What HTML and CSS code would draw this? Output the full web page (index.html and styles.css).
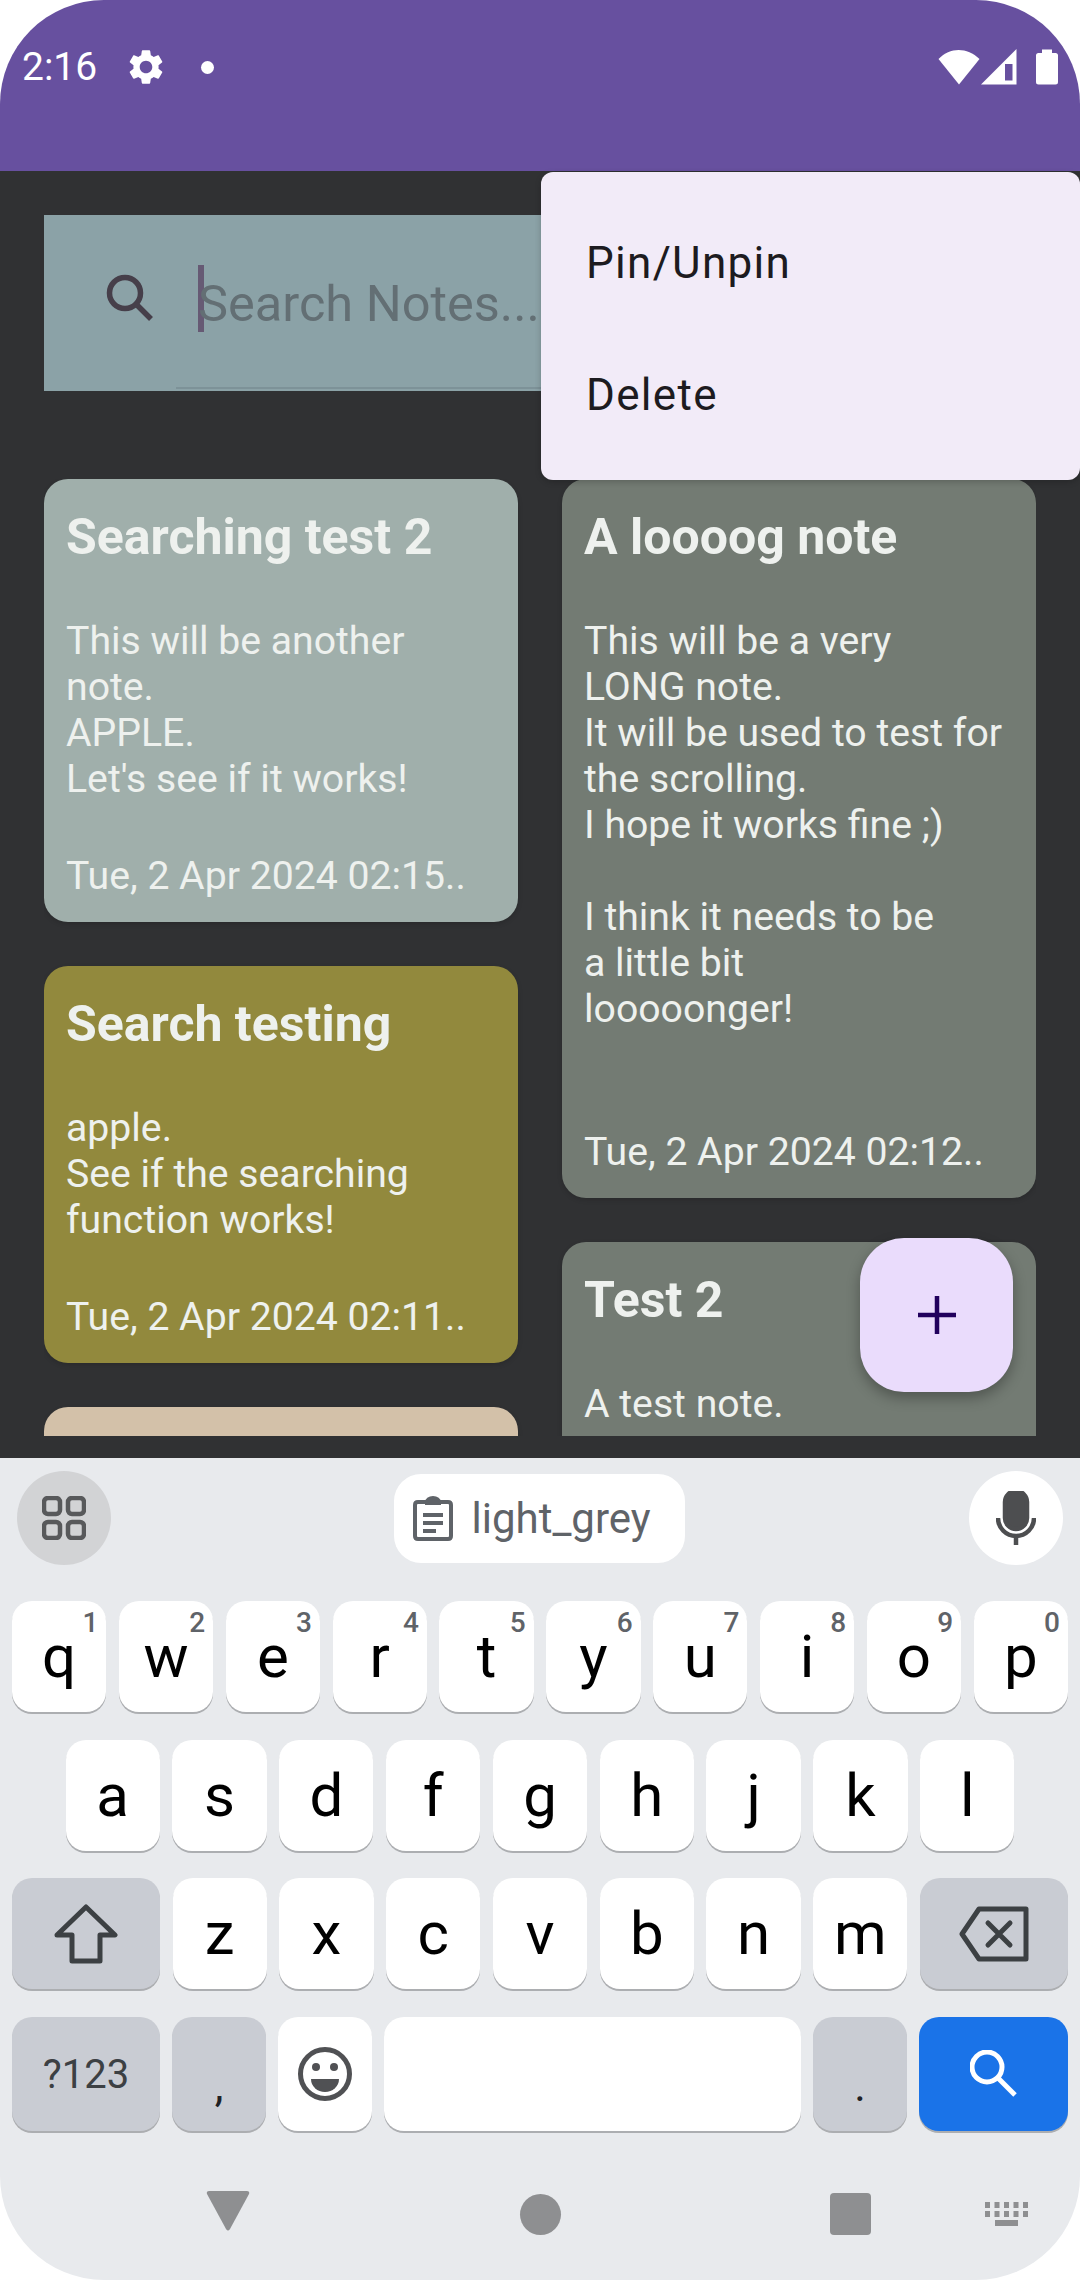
FILE: index.html
```html
<!DOCTYPE html>
<html lang="en">
<head>
  <meta charset="UTF-8">
  <title>Notes</title>
  <link rel="stylesheet" href="styles.css">
</head>
<body>
  <div class="screen">

    <!-- Status bar and app bar -->
    <header class="top-bar">
      <span class="clock">2:16</span>
      <svg class="gear" viewBox="0 0 24 24"><path d="M19.14 12.94c.04-.3.06-.61.06-.94 0-.32-.02-.64-.07-.94l2.03-1.58c.18-.14.23-.41.12-.61l-1.92-3.32c-.12-.22-.37-.29-.59-.22l-2.39.96c-.5-.38-1.03-.7-1.62-.94l-.36-2.54c-.04-.24-.24-.41-.48-.41h-3.84c-.24 0-.43.17-.47.41l-.36 2.54c-.59.24-1.13.57-1.62.94l-2.39-.96c-.22-.08-.47 0-.59.22L2.74 8.87c-.12.21-.08.47.12.61l2.03 1.58c-.05.3-.09.63-.09.94s.02.64.07.94l-2.03 1.58c-.18.14-.23.41-.12.61l1.92 3.32c.12.22.37.29.59.22l2.39-.96c.5.38 1.03.7 1.62.94l.36 2.54c.05.24.24.41.48.41h3.84c.24 0 .44-.17.47-.41l.36-2.54c.59-.24 1.13-.56 1.62-.94l2.39.96c.22.08.47 0 .59-.22l1.92-3.32c.12-.22.07-.47-.12-.61l-2.01-1.58zM12 15.6c-1.98 0-3.6-1.62-3.6-3.6s1.62-3.6 3.6-3.6 3.6 1.62 3.6 3.6-1.62 3.6-3.6 3.6z"/></svg>
      <span class="status-dot"></span>
      <div class="status-right">
        <svg class="wifi" viewBox="0 0 42 35"><path d="M0.5 9C12 -3 29 -3 41.500 9L21 34.500Z"/></svg>
        <svg class="signal" viewBox="0 0 36 36"><path fill-rule="evenodd" d="M0 35.500L35.500 0V35.500ZM24 15V31.500H31.500V15Z"/></svg>
        <svg class="battery" viewBox="0 0 22 36"><path d="M6 0.500H16V4H19.500Q22 4 22 6.500V33Q22 35.500 19.500 35.500H2.500Q0 35.500 0 33V6.500Q0 4 2.500 4H6Z"/></svg>
      </div>
    </header>

    <!-- Notes screen -->
    <main class="content">
      <div class="search-box">
        <svg class="search-icon" viewBox="0 0 48 48"><circle cx="19" cy="19" r="15.500"/><path d="M30 30L45 45"/></svg>
        <div class="search-field">
          <span class="caret"></span>
          <span class="placeholder">Search Notes...</span>
        </div>
      </div>

      <div class="notes">
        <div class="notes-col">
          <article class="note note-sage">
            <h3>Searching test 2</h3>
            <p>This will be another<br>note.<br>APPLE.<br>Let's see if it works!</p>
            <div class="note-date">Tue, 2 Apr 2024 02:15..</div>
          </article>
          <article class="note note-olive">
            <h3>Search testing</h3>
            <p>apple.<br>See if the searching<br>function works!</p>
            <div class="note-date">Tue, 2 Apr 2024 02:11..</div>
          </article>
          <article class="note note-sand note-cut"></article>
        </div>
        <div class="notes-col">
          <article class="note note-moss">
            <h3>A loooog note</h3>
            <p>This will be a very<br>LONG note.<br>It will be used to test for<br>the scrolling.<br>I hope it works fine ;)<br><br>I think it needs to be<br>a little bit<br>looooonger!<br><br></p>
            <div class="note-date">Tue, 2 Apr 2024 02:12..</div>
          </article>
          <article class="note note-moss note-cut">
            <h3>Test 2</h3>
            <p>A test note.</p>
          </article>
        </div>
      </div>

      <button class="fab"><svg viewBox="0 0 40 40"><path d="M20 1V39M1 20H39"/></svg></button>

      <div class="menu">
        <div class="menu-item">Pin/Unpin</div>
        <div class="menu-item">Delete</div>
      </div>
    </main>

    <!-- Keyboard -->
    <section class="keyboard">
      <div class="kb-tools">
        <div class="tool-btn tool-grey">
          <svg class="grid-icon" viewBox="0 0 44 44"><rect x="2" y="2" width="16" height="16" rx="4"/><rect x="26" y="2" width="16" height="16" rx="4"/><rect x="2" y="26" width="16" height="16" rx="4"/><rect x="26" y="26" width="16" height="16" rx="4"/></svg>
        </div>
        <div class="clip-chip">
          <svg class="clip-icon" viewBox="0 0 40 46"><path class="clip-outline" d="M13 7H5Q2 7 2 10V41Q2 44 5 44H35Q38 44 38 41V10Q38 7 35 7H27"/><path class="clip-top" d="M12 10V7A8 6 0 0 1 28 7V10Z"/><path class="clip-lines" d="M10 20H30M10 28H30M10 36H23"/></svg>
          <span>light_grey</span>
        </div>
        <div class="tool-btn">
          <svg class="mic-icon" viewBox="0 0 40 54"><rect x="9" y="0" width="22" height="38" rx="11" fill="#4d4e50"/><path d="M2 27A18 18 0 0 0 38 27M20 44V54"/></svg>
        </div>
      </div>

      <div class="kb-row">
        <div class="key">q<sup>1</sup></div>
        <div class="key">w<sup>2</sup></div>
        <div class="key">e<sup>3</sup></div>
        <div class="key">r<sup>4</sup></div>
        <div class="key">t<sup>5</sup></div>
        <div class="key">y<sup>6</sup></div>
        <div class="key">u<sup>7</sup></div>
        <div class="key">i<sup>8</sup></div>
        <div class="key">o<sup>9</sup></div>
        <div class="key">p<sup>0</sup></div>
      </div>
      <div class="kb-row kb-row-inset">
        <div class="key">a</div>
        <div class="key">s</div>
        <div class="key">d</div>
        <div class="key">f</div>
        <div class="key">g</div>
        <div class="key">h</div>
        <div class="key">j</div>
        <div class="key">k</div>
        <div class="key">l</div>
      </div>
      <div class="kb-row">
        <div class="key key-wide key-fn">
          <svg class="shift-icon" viewBox="0 0 64 60"><path d="M32 3L61 31H46V57H18V31H3Z"/></svg>
        </div>
        <div class="key">z</div>
        <div class="key">x</div>
        <div class="key">c</div>
        <div class="key">v</div>
        <div class="key">b</div>
        <div class="key">n</div>
        <div class="key">m</div>
        <div class="key key-wide key-fn">
          <svg class="back-icon" viewBox="0 0 70 56"><path d="M3 28L20 3H67V53H20Z"/><path d="M29 17L51 39M51 17L29 39"/></svg>
        </div>
      </div>
      <div class="kb-row kb-row-last">
        <div class="key key-wide key-fn key-label">?123</div>
        <div class="key key-fixed key-fn key-punct">,</div>
        <div class="key key-fixed">
          <svg class="emoji-icon" viewBox="0 0 56 56"><circle class="face" cx="28" cy="28" r="24.500"/><circle cx="19" cy="21" r="4"/><circle cx="37" cy="21" r="4"/><path d="M14 33H42A14 13 0 0 1 14 33Z"/></svg>
        </div>
        <div class="key"></div>
        <div class="key key-fixed key-fn key-punct">.</div>
        <div class="key key-wide key-go">
          <svg class="go-icon" viewBox="0 0 48 48"><circle cx="17" cy="17" r="15"/><path d="M28 28L45 45"/></svg>
        </div>
      </div>

      <nav class="nav-bar">
        <svg class="nav-back" viewBox="0 0 44 40"><path d="M3 0H41Q44 0 43 3L24 38Q22 41 20 38L1 3Q0 0 3 0Z"/></svg>
        <span class="nav-home"></span>
        <span class="nav-recent"></span>
        <svg class="nav-kb" viewBox="0 0 43 24"><path d="M0 0h5v6H0zM9.500 0h5v6h-5zM19 0h5v6h-5zM28.500 0h5v6h-5zM38 0h5v6h-5zM0 9h5v6H0zM9.500 9h5v6h-5zM19 9h5v6h-5zM28.500 9h5v6h-5zM38 9h5v6h-5zM10 18h23v6H10z"/></svg>
      </nav>
    </section>
  </div>
</body>
</html>
```

FILE: styles.css
```css
* {
  box-sizing: border-box;
}
body {
  margin: 0;
  background: #fff;
  font-family: Roboto, "Liberation Sans", sans-serif;
}
.screen {
  width: 1080px;
  height: 2280px;
  border-radius: 104px;
  overflow: hidden;
  display: flex;
  flex-direction: column;
}

/* top bar */
.top-bar {
  height: 171px;
  flex: none;
  background: #67509f;
  color: #fff;
  display: flex;
  align-items: center;
  align-self: stretch;
  padding: 47px 22px 84px 22px;
}
.clock {
  font-size: 39px;
  line-height: 40px;
}
.gear {
  width: 42px;
  height: 42px;
  margin-left: 28px;
  fill: #fff;
}
.status-dot {
  width: 13px;
  height: 13px;
  margin-left: 34px;
  border-radius: 50%;
  background: #fff;
}
.status-right {
  margin-left: auto;
  display: flex;
  align-items: center;
}
.status-right svg {
  fill: #fff;
}
.wifi {
  width: 42px;
  height: 35px;
}
.signal {
  width: 36px;
  height: 36px;
  margin-left: 1px;
}
.battery {
  width: 22px;
  height: 36px;
  margin-left: 19px;
}

/* main area */
.content {
  position: relative;
  height: 1287px;
  flex: none;
  background: #303133;
  padding: 44px 44px 22px;
  display: flex;
  flex-direction: column;
}
.search-box {
  height: 176px;
  flex: none;
  background: #8ba2a7;
  display: flex;
  align-items: stretch;
  padding-bottom: 2px;
}
.search-icon {
  width: 48px;
  height: 48px;
  margin: 59px 0 0 62px;
  fill: none;
  stroke: #463f4a;
  stroke-width: 5.500;
}
.search-field {
  flex: 1;
  margin-left: 22px;
  padding-left: 22px;
  display: flex;
  align-items: center;
  border-bottom: 2px solid #7d9298;
}
.caret {
  width: 6px;
  height: 67px;
  margin: -6px -6px 0 0;
  background: #665a74;
}
.placeholder {
  margin-top: 5px;
  font-size: 50.500px;
  color: #636f74;
}
.notes {
  flex: 1;
  margin-top: 88px;
  display: flex;
  gap: 44px;
  overflow: hidden;
  min-height: 0;
}
.notes-col {
  width: 474px;
  display: flex;
  flex-direction: column;
  gap: 44px;
}
.note {
  flex: none;
  border-radius: 24px;
  padding: 28px 22px 23px;
  color: #eef1ee;
  box-shadow: 0 2px 5px rgba(0, 0, 0, 0.15);
}
.note h3 {
  margin: 0;
  font-size: 50px;
  line-height: 60px;
  font-weight: 700;
}
.note p {
  margin: 51px 0 0;
  font-size: 39.200px;
  line-height: 46px;
}
.note-date {
  margin-top: 51px;
  font-size: 39.200px;
  line-height: 46px;
}
.note-cut {
  min-height: 260px;
}
.note-sage {
  background: #a0afab;
}
.note-olive {
  background: #92893d;
}
.note-sand {
  background: #d3c1a9;
}
.note-moss {
  background: #737b73;
}
.fab {
  position: absolute;
  top: 1067px;
  left: 860px;
  width: 153px;
  height: 154px;
  padding: 0;
  border: 0;
  border-radius: 44px;
  background: #eadcfc;
  box-shadow: 0 6px 14px rgba(0, 0, 0, 0.3);
  display: flex;
  align-items: center;
  justify-content: center;
}
.fab svg {
  width: 40px;
  height: 40px;
  fill: none;
  stroke: #21005d;
  stroke-width: 4.500;
}
.menu {
  position: absolute;
  top: 1px;
  right: 0;
  width: 539px;
  height: 308px;
  padding-top: 25px;
  border-radius: 12px;
  background: #f2ebf8;
  box-shadow: 0 2px 6px rgba(0, 0, 0, 0.2);
}
.menu-item {
  height: 132px;
  padding-left: 45px;
  display: flex;
  align-items: center;
  font-size: 44px;
  letter-spacing: 1.300px;
  color: #1d1b20;
}

/* keyboard */
.keyboard {
  flex: 1;
  background: #e8eaed;
  padding: 13px 12px 0;
  display: flex;
  flex-direction: column;
}
.kb-tools {
  height: 94px;
  margin: 0 5px 36px;
  flex: none;
  display: flex;
  align-items: center;
  justify-content: space-between;
}
.tool-btn {
  width: 94px;
  height: 94px;
  border-radius: 50%;
  background: #fff;
  display: flex;
  align-items: center;
  justify-content: center;
}
.tool-grey {
  background: #d2d3d5;
}
.grid-icon {
  width: 44px;
  height: 44px;
  fill: none;
  stroke: #58595b;
  stroke-width: 4.500;
}
.clip-chip {
  width: 291px;
  height: 89px;
  margin-left: -2px;
  padding-left: 19px;
  border-radius: 27px;
  background: #fff;
  display: flex;
  align-items: center;
  gap: 19px;
  font-size: 42px;
  color: #5f6368;
}
.clip-icon {
  width: 40px;
  height: 46px;
  fill: none;
  stroke: #5f6368;
}
.clip-outline {
  stroke-width: 4;
}
.clip-top {
  fill: #5f6368;
  stroke: none;
}
.clip-lines {
  stroke-width: 4;
}
.mic-icon {
  width: 40px;
  height: 54px;
  fill: none;
  stroke: #4d4e50;
  stroke-width: 4.500;
}
.kb-row {
  height: 113px;
  margin-bottom: 25.700px;
  flex: none;
  display: flex;
  gap: 12.500px;
}
.kb-row-inset {
  padding: 0 53.500px;
}
.kb-row-last {
  height: 116px;
  margin-bottom: 0;
  gap: 12px;
}
.key {
  position: relative;
  flex: 1;
  height: calc(100% - 2px);
  border-radius: 20px;
  background: #fff;
  box-shadow: 0 2px 0 #acaeb1;
  display: flex;
  align-items: center;
  justify-content: center;
  font-size: 60px;
  color: #000;
}
.key sup {
  position: absolute;
  top: 5px;
  right: 8px;
  font-size: 28px;
  line-height: 33px;
  font-weight: 500;
  color: #5f6368;
}
.key-wide {
  flex: 0 0 148px;
}
.key-fixed {
  flex: 0 0 94px;
}
.key-go {
  flex-basis: 149px;
}
.key-fn {
  background: #c9ccd3;
}
.key-label {
  font-size: 40px;
  color: #3c4043;
}
.key-punct {
  font-size: 44px;
  color: #202124;
  padding-top: 24px;
}
.key-go {
  background: #1a73e8;
}
.shift-icon {
  width: 64px;
  height: 60px;
  fill: none;
  stroke: #3c4043;
  stroke-width: 5;
  stroke-linejoin: round;
}
.back-icon {
  width: 70px;
  height: 56px;
  fill: none;
  stroke: #3c4043;
  stroke-width: 5;
  stroke-linejoin: round;
  stroke-linecap: round;
}
.emoji-icon {
  width: 56px;
  height: 56px;
  fill: #505154;
}
.emoji-icon .face {
  fill: none;
  stroke: #505154;
  stroke-width: 5;
}
.go-icon {
  width: 48px;
  height: 48px;
  fill: none;
  stroke: #fff;
  stroke-width: 5;
}

/* nav bar */
.nav-bar {
  flex: 1;
  margin: 0 -12px;
  padding: 58px 0 0 116px;
  display: grid;
  grid-template-columns: 224px 400px 220px 92px;
  grid-template-rows: 46px;
  align-items: center;
  justify-items: center;
}
.nav-back {
  width: 44px;
  height: 40px;
  margin-top: -7px;
  fill: #8e8f91;
}
.nav-home {
  width: 41px;
  height: 41px;
  border-radius: 50%;
  background: #8e8f91;
}
.nav-recent {
  width: 41px;
  height: 42px;
  border-radius: 4px;
  background: #8e8f91;
}
.nav-kb {
  width: 43px;
  height: 24px;
  fill: #8e8f91;
}
```
